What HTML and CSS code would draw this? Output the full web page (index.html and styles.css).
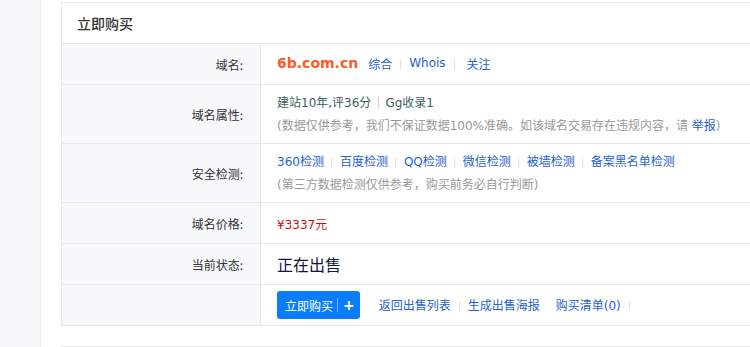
FILE: index.html
```html
<!DOCTYPE html>
<html lang="zh-CN">
<head>
<meta charset="utf-8">
<title>立即购买</title>
<link rel="stylesheet" href="styles.css">
</head>
<body>
<div class="page">
  <aside class="side"></aside>
  <main class="main">
    <section class="card">
      <h2 class="card-head">立即购买</h2>
      <div class="row">
        <div class="label">域名:</div>
        <div class="value">
          <span class="domain">6b.com.cn</span>
          <a class="link">综合</a><span class="sep"></span><a class="link">Whois</a><span class="sep"></span><a class="link wide">关注</a>
        </div>
      </div>
      <div class="row tall">
        <div class="label">域名属性:</div>
        <div class="value stack">
          <div class="attr">建站10年,评36分<span class="bar">|</span>Gg收录1</div>
          <div class="note">(数据仅供参考，我们不保证数据100%准确。如该域名交易存在违规内容，请 <a class="link">举报</a>)</div>
        </div>
      </div>
      <div class="row tall">
        <div class="label">安全检测:</div>
        <div class="value stack">
          <div class="links"><a class="link">360检测</a><span class="sep"></span><a class="link">百度检测</a><span class="sep"></span><a class="link">QQ检测</a><span class="sep"></span><a class="link">微信检测</a><span class="sep"></span><a class="link">被墙检测</a><span class="sep"></span><a class="link">备案黑名单检测</a></div>
          <div class="note">(第三方数据检测仅供参考，购买前务必自行判断)</div>
        </div>
      </div>
      <div class="row">
        <div class="label">域名价格:</div>
        <div class="value"><span class="price">¥3337元</span></div>
      </div>
      <div class="row">
        <div class="label">当前状态:</div>
        <div class="value"><span class="status">正在出售</span></div>
      </div>
      <div class="row">
        <div class="label"></div>
        <div class="value">
          <button class="buy"><span>立即购买</span><span class="buy-sep"></span><span class="plus">+</span></button>
          <a class="link">返回出售列表</a><span class="sep"></span><a class="link">生成出售海报</a><a class="link gap">购买清单(0)</a><span class="sep"></span>
        </div>
      </div>
    </section>
    <section class="card next"></section>
  </main>
</div>
</body>
</html>
```

FILE: styles.css
```css
* { box-sizing: border-box; }
html, body { margin: 0; padding: 0; background: #fff; }
body {
  font-family: "DejaVu Sans", "Noto Sans CJK SC", sans-serif;
  font-size: 12px;
  color: #333;
}
.page {
  display: flex;
  height: 347px;
  overflow: hidden;
}
.side {
  flex: 0 0 41px;
  background: #f6f7f9;
  border-right: 1px solid #ececec;
}
.main {
  flex: 1;
  padding: 2px 0 0 20px;
  overflow: hidden;
}
.card {
  width: calc(100% + 30px);
  border: 1px solid #e8e8e8;
  background: #fff;
}
.card.next {
  margin-top: 20px;
  height: 40px;
}
.card-head {
  margin: 0;
  height: 40px;
  line-height: 40px;
  padding-left: 15px;
  font-family: "Noto Sans CJK SC", sans-serif;
  font-size: 14px;
  font-weight: 500;
  color: #333;
}
.row {
  display: grid;
  grid-template-columns: 199px 1fr;
  border-top: 1px solid #e8e8e8;
  height: 41px;
}
.row.tall { height: 59px; }
.label {
  background: #f7f8fa;
  border-right: 1px solid #e8e8e8;
  padding-right: 17px;
  display: flex;
  align-items: center;
  justify-content: flex-end;
  color: #333;
  font-family: "Noto Sans CJK SC", sans-serif;
}
.value {
  display: flex;
  align-items: center;
  padding-left: 16px;
  white-space: nowrap;
}
.value.stack {
  flex-direction: column;
  align-items: flex-start;
  justify-content: center;
  gap: 3px;
  line-height: 20px;
  padding-top: 1px;
}
.domain {
  font-size: 14px;
  font-weight: bold;
  color: #ff5a26;
  margin-right: 10px;
  position: relative;
  top: -1px;
}
.link {
  color: #2563cf;
  text-decoration: none;
  cursor: pointer;
}
.value > .link { position: relative; top: -1px; }
.link.wide { margin-left: 4px; }
.link.gap { margin-left: 16px; }
.sep {
  display: inline-block;
  width: 1px;
  height: 9px;
  background: #ddd;
  margin: 0 8px;
}
.links .sep { margin: 0 8px 0 7px; }
.links { display: flex; align-items: center; }
.attr { color: #3e5e5e; }
.bar { color: #ccc; margin: 0 5px; }
.note { color: #999; }
.price { color: #cc1010; }
.status {
  font-family: "Noto Sans CJK SC", sans-serif;
  font-size: 16px;
  color: #14144a;
}
.buy {
  display: inline-flex;
  align-items: center;
  flex: 0 0 auto;
  height: 28px;
  padding: 0 5px 0 8px;
  margin-right: 19px;
  border: 0;
  border-radius: 3px;
  background: #0a7efa;
  color: #fff;
  font-family: "Noto Sans CJK SC", sans-serif;
  font-size: 12px;
  white-space: nowrap;
  cursor: pointer;
}
.buy-sep {
  display: inline-block;
  width: 1px;
  height: 14px;
  background: rgba(255,255,255,0.45);
  margin: 0 5px 0 4px;
}
.plus {
  font-family: "DejaVu Sans", sans-serif;
  font-weight: bold;
  font-size: 14px;
}
```
